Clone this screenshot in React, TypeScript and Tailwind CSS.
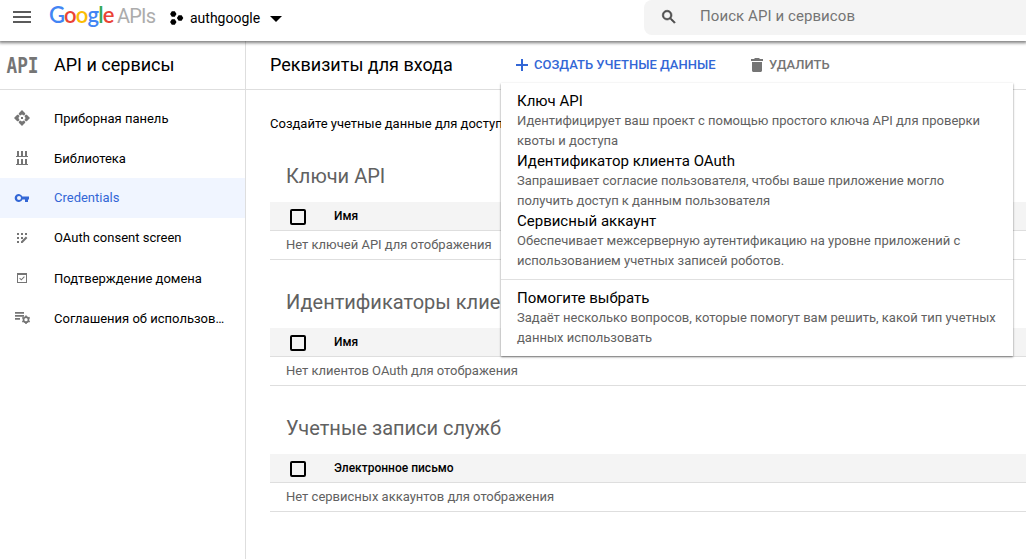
import React from "react";

type IconProps = { className?: string };

const MenuIcon = () => (
  <svg className="h-[12px] w-[18px]" viewBox="0 0 18 12" fill="#5b5b5b" shapeRendering="crispEdges">
    <path d="M0 0h18v2H0zM0 5h18v2H0zM0 10h18v2H0z" />
  </svg>
);

const ProjectIcon = () => (
  <svg className="h-[14px] w-[14px]" viewBox="0 0 14 14" fill="#000">
    <path d="M1.8.2h3l1.7 2.8-1.7 2.8h-3L.1 3zM1.8 8.2h3L6.5 11l-1.7 2.8h-3L.1 11zM8.6 4.2h3L13.3 7l-1.7 2.8h-3L6.9 7z" />
  </svg>
);

const SearchIcon = () => (
  <svg className="h-[18px] w-[18px]" viewBox="0 0 24 24" fill="#4b4b4b" stroke="#4b4b4b" strokeWidth=".8">
    <path d="M15.5 14h-.79l-.28-.27A6.471 6.471 0 0 0 16 9.5 6.5 6.5 0 1 0 9.5 16c1.61 0 3.09-.59 4.23-1.57l.27.28v.79l5 4.99L20.49 19l-4.99-5zm-6 0C7.01 14 5 11.99 5 9.5S7.01 5 9.5 5 14 7.01 14 9.5 11.99 14 9.5 14z" />
  </svg>
);

const DashboardIcon = ({ className }: IconProps) => (
  <svg className={className} viewBox="0 0 18 18" fill="currentColor">
    <path d="M9 1l3.2 3.2v1L10.9 6.6 9 5.4 7.1 6.6 5.8 5.2v-1zM9 17l-3.2-3.2v-1l1.3-1.4L9 12.6l1.9-1.2 1.3 1.4v1zM1 9l3.2-3.2h1l1.4 1.3L5.4 9l1.2 1.9-1.4 1.3h-1zM17 9l-3.2 3.2h-1l-1.4-1.3L12.6 9l-1.2-1.9 1.4-1.3h1zM8 8h2v2H8z" />
  </svg>
);

const LibraryIcon = ({ className }: IconProps) => (
  <svg className={className} viewBox="0 0 18 18" fill="currentColor" shapeRendering="crispEdges">
    <path d="M4 2h2v5H4zM8 2h2v5H8zM12 2h2v5h-2zM3 7h12v1H3zM4 10h2v5H4zM8 10h2v5H8zM12 10h2v5h-2zM3 15h12v1H3z" />
  </svg>
);

const KeyIcon = ({ className }: IconProps) => (
  <svg className={className} viewBox="0 0 18 18" fill="currentColor">
    <path d="M9.4 7.6a4 4 0 1 0 0 2.8H12V13h3v-2.6h1V7.6zM6 11a2 2 0 1 1 0-4 2 2 0 0 1 0 4z" />
  </svg>
);

const ConsentIcon = ({ className }: IconProps) => (
  <svg className={className} viewBox="0 0 18 18" fill="currentColor">
    <path d="M4 4h2v2H4zM8 4h2v2H8zM12 4h2v2h-2zM4 8h2v2H4zM8 8h2v2H8zM4 12h2v2H4zM12.9 7.6l1.5 1.5-4.9 4.9H8v-1.5z" />
  </svg>
);

const DomainIcon = ({ className }: IconProps) => (
  <svg className={className} viewBox="0 0 18 18" fill="currentColor">
    <path fillRule="evenodd" d="M4 4h10v10H4zM5 6v7h8V6z" />
    <path d="M6.6 9.2l1.7 1.6 3.1-3.1" fill="none" stroke="currentColor" strokeWidth="1.1" />
  </svg>
);

const AgreementIcon = ({ className }: IconProps) => (
  <svg className={className} viewBox="0 0 18 18" fill="currentColor">
    <path d="M2 3h9v1.7H2zM2 6h9v1.7H2zM2 9h5v1.7H2z" />
    <circle cx="13" cy="10.7" r="2.5" fill="none" stroke="currentColor" strokeWidth="1.7" />
    <path d="M13 6.4v2M13 13v2M9.3 8.55l1.6.95M15.1 11.9l1.6.95M9.3 12.85l1.6-.95M15.1 9.5l1.6-.95" stroke="currentColor" strokeWidth="1.6" />
  </svg>
);

const TrashIcon = () => (
  <svg className="h-[14px] w-[12px]" viewBox="0 0 12 14" fill="#757575">
    <path d="M4 0h4l1 1h3v2H0V1h3zM1 4h10v8.5c0 .8-.7 1.5-1.5 1.5h-7C1.7 14 1 13.3 1 12.5z" />
  </svg>
);

const nav = [
  { label: "Приборная панель", icon: DashboardIcon, lowered: true },
  { label: "Библиотека", icon: LibraryIcon, lowered: true },
  { label: "Credentials", icon: KeyIcon, active: true },
  { label: "OAuth consent screen", icon: ConsentIcon },
  { label: "Подтверждение домена", icon: DomainIcon, lowered: true },
  { label: "Соглашения об использов…", icon: AgreementIcon, lowered: true },
];

const tables = [
  { title: "Ключи API", column: "Имя", empty: "Нет ключей API для отображения" },
  { title: "Идентификаторы клиентов OAuth 2.0", column: "Имя", empty: "Нет клиентов OAuth для отображения" },
  { title: "Учетные записи служб", column: "Электронное письмо", empty: "Нет сервисных аккаунтов для отображения" },
];

const options = [
  { title: "Ключ API", lines: ["Идентифицирует ваш проект с помощью простого ключа API для проверки", "квоты и доступа"] },
  { title: "Идентификатор клиента OAuth", lines: ["Запрашивает согласие пользователя, чтобы ваше приложение могло", "получить доступ к данным пользователя"] },
  { title: "Сервисный аккаунт", lines: ["Обеспечивает межсерверную аутентификацию на уровне приложений с", "использованием учетных записей роботов."] },
];

const help = {
  title: "Помогите выбрать",
  lines: ["Задаёт несколько вопросов, которые помогут вам решить, какой тип учетных", "данных использовать"],
};

function Option({ title, lines }: { title: string; lines: string[] }) {
  return (
    <div className="h-[60px] whitespace-nowrap px-4">
      <div className="h-5 text-[15px] leading-5 text-black">{title}</div>
      {lines.map((line) => (
        <div key={line} className="h-5 text-[13px] leading-5 text-[#616161]">{line}</div>
      ))}
    </div>
  );
}

function Header() {
  return (
    <header className="relative z-10 flex h-[41px] shrink-0 bg-white shadow-[0_1px_3px_1px_rgba(0,0,0,0.5)]">
      <div className="flex w-[644px] items-start pl-[13px]">
        <div className="pt-[11px]"><MenuIcon /></div>
        <div className="ml-[18px] flex w-[121px] whitespace-nowrap">
          <span className="w-[68px] font-['Lato',sans-serif] text-[22px] font-semibold leading-[30px] tracking-[-0.8px]">
            <span className="text-[#4285f4]">G</span>
            <span className="text-[#ea4335]">o</span>
            <span className="text-[#fbbc05]">o</span>
            <span className="text-[#4285f4]">g</span>
            <span className="text-[#34a853]">l</span>
            <span className="text-[#ea4335]">e</span>
          </span>
          <span className="text-[20px] font-normal leading-8 tracking-[-0.8px] text-[#acacac]">APIs</span>
        </div>
        <div className="pt-[11px]"><ProjectIcon /></div>
        <div className="ml-[6px] w-[80px] pt-2 text-[14px] leading-5 text-black">authgoogle</div>
        <svg className="mt-4 h-[6px] w-[12px]" viewBox="0 0 12 6"><path d="M0 0h12L6 6z" /></svg>
      </div>
      <div className="flex h-[35px] flex-1 items-start rounded-l-lg bg-[#f4f4f4] pl-4">
        <div className="pt-2"><SearchIcon /></div>
        <span className="pl-[22px] pt-[6px] text-[15px] leading-5 tracking-[0.08px] text-[#757575]">Поиск API и сервисов</span>
      </div>
    </header>
  );
}

function Sidebar() {
  return (
    <aside className="flex w-[246px] shrink-0 flex-col border-r border-[#dedede]">
      <div className="flex h-[49px] items-center border-b border-[#dedede] pl-[6px]">
        <svg className="h-[20px] w-[34px] overflow-visible" viewBox="0 0 34 20">
          <text x="0.5" y="17.5" textLength="32" lengthAdjust="spacingAndGlyphs" fill="#757575" fontFamily="DejaVu Sans Mono" fontSize="21" fontWeight="700">API</text>
        </svg>
        <span className="ml-[14px] text-[18px] leading-6 text-black">API и сервисы</span>
      </div>
      <nav className="flex flex-col pt-2">
        {nav.map(({ label, icon: Icon, active, lowered }) => (
          <div key={label} className={active ? "flex h-10 items-center bg-[#f0f5ff] pl-[13px] text-[#3367d6]" : "flex h-10 items-center pl-[13px] text-black"}>
            <Icon className={active ? "h-[18px] w-[18px] shrink-0 text-[#3367d6]" : "h-[18px] w-[18px] shrink-0 text-[#757575]"} />
            <span className={lowered ? "ml-[23px] whitespace-nowrap pt-0.5 text-[13px] leading-5" : "ml-[23px] whitespace-nowrap text-[13px] leading-5"}>{label}</span>
          </div>
        ))}
      </nav>
    </aside>
  );
}

export default function App() {
  return (
    <div className="flex h-[559px] w-[1026px] flex-col overflow-hidden bg-white font-['Roboto',sans-serif]">
      <Header />
      <div className="flex min-h-0 flex-1">
        <Sidebar />
        <main className="flex min-w-0 flex-1 flex-col">
          <div className="flex h-[49px] shrink-0 items-center border-b border-[#dedede] pl-6">
            <h1 className="w-[246px] text-[18px] leading-6 text-black">Реквизиты для входа</h1>
            <div className="relative flex w-[235px] items-center text-[#3367d6]">
              <svg className="h-[12px] w-[12px]" viewBox="0 0 12 12" fill="currentColor"><path d="M5 0h2v5h5v2H7v5H5V7H0V5h5z" /></svg>
              <span className="ml-[6px] whitespace-nowrap text-[13px] font-medium leading-5">СОЗДАТЬ УЧЕТНЫЕ ДАННЫЕ</span>
              <div className="absolute left-[-15px] top-[28px] h-[273px] w-[512px] bg-white pt-2 shadow-[0_1px_2px_rgba(0,0,0,0.5)]">
                {options.map((option) => <Option key={option.title} {...option} />)}
                <div className="mt-2 border-t border-[#e0e0e0] pt-2">
                  <Option {...help} />
                </div>
              </div>
            </div>
            <TrashIcon />
            <span className="ml-[6px] text-[13px] font-medium leading-5 text-[#757575]">УДАЛИТЬ</span>
          </div>
          <p className="whitespace-nowrap pl-6 pt-6 text-[13px] leading-5 text-black">Создайте учетные данные для доступа к включенным API.</p>
          <div className="flex flex-col pl-6 pt-[26px]">
            {tables.map((table) => (
              <section key={table.title} className="h-[126px]">
                <h2 className="h-[42px] whitespace-nowrap pl-4 pt-[2px] text-[20px] leading-7 text-[#616161]">{table.title}</h2>
                <div className="flex h-[29px] items-center border-b border-[#dedede] bg-[#f4f4f4] pl-5">
                  <span className="mt-[2px] h-4 w-4 rounded-[2px] border-2 border-black" />
                  <span className="ml-7 text-[12px] font-medium leading-4 text-black">{table.column}</span>
                </div>
                <div className="flex h-[29px] items-center border-b border-[#dedede] pl-4 text-[13px] text-[#616161]">{table.empty}</div>
              </section>
            ))}
          </div>
        </main>
      </div>
    </div>
  );
}
